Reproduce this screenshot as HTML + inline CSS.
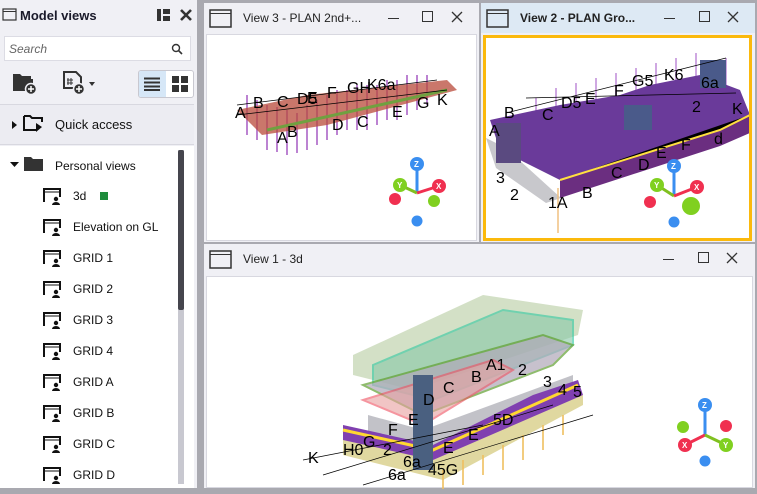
<!DOCTYPE html>
<html><head><meta charset="utf-8"><style>
*{box-sizing:border-box;margin:0;padding:0}
body{width:757px;height:488px;overflow:hidden;background:#a9a9b0;font-family:"Liberation Sans",sans-serif;position:relative}
.abs{position:absolute}
#left{left:0;top:0;width:197px;height:488px;background:#f0f0f5}
.title{font-weight:bold;font-size:13px;color:#1a1a2a}
.item{position:absolute;left:43px;font-size:12px;color:#111;height:20px;line-height:20px}
.item svg{position:absolute;left:0;top:1px}
.item span{position:absolute;left:30px;white-space:nowrap}
.win{position:absolute;background:#f0f0f5}
.hdr{position:absolute;left:0;top:0;right:0;height:30px}
.wt{position:absolute;top:8px;left:39px;font-size:12px;color:#222;white-space:nowrap}
.content{position:absolute;background:#fff;border:1px solid #d8d8e0}
</style></head><body>
<div id="left" class="abs">
  <svg class="abs" style="left:2px;top:8px" width="16" height="14"><rect x="1" y="1" width="13" height="11" fill="none" stroke="#333" stroke-width="1.2"/><line x1="1" y1="3.5" x2="14" y2="3.5" stroke="#333"/></svg>
  <div class="abs title" style="left:20px;top:8px">Model views</div>
  <svg class="abs" style="left:157px;top:9px" width="14" height="12"><rect x="0" y="0" width="4" height="12" fill="#333"/><rect x="6" y="0" width="7" height="5" fill="#333"/><rect x="6" y="7" width="7" height="5" fill="#333"/></svg>
  <svg class="abs" style="left:180px;top:9px" width="12" height="12"><path d="M1 1L11 11M11 1L1 11" stroke="#333" stroke-width="2.6"/></svg>
  <div class="abs" style="left:4px;top:36px;width:187px;height:25px;background:#fff;border:1px solid #dcdce4"><span style="position:absolute;left:4px;top:5px;font-size:12px;font-style:italic;color:#666">Search</span>
    <svg class="abs" style="left:166px;top:6px" width="12" height="12"><circle cx="5" cy="5" r="3.5" fill="none" stroke="#333" stroke-width="1.4"/><path d="M7.5 7.5L11 11" stroke="#333" stroke-width="1.6"/></svg></div>
  <svg class="abs" style="left:12px;top:71px" width="26" height="24"><path d="M1 3h7l2 2h9v5H1z" fill="#333"/><path d="M1 8h20v12H1z" fill="#333"/><circle cx="19" cy="18" r="5.5" fill="#333" stroke="#f0f0f5" stroke-width="1.5"/><path d="M19 15v6M16 18h6" stroke="#fff" stroke-width="1.5"/></svg>
  <svg class="abs" style="left:62px;top:70px" width="38" height="26"><path d="M2 2h12l5 5v11H2z" fill="none" stroke="#333" stroke-width="2"/><path d="M6 8v7M9 8v7M5 10h6M5 13h6" stroke="#333" stroke-width="1"/><circle cx="17" cy="19" r="5.5" fill="#333" stroke="#f0f0f5" stroke-width="1.5"/><path d="M17 16v6M14 19h6" stroke="#fff" stroke-width="1.5"/><path d="M27 12h6l-3 4z" fill="#333"/></svg>
  <div class="abs" style="left:138px;top:70px;width:56px;height:28px;border:1px solid #c8c8d0;border-radius:3px;background:#fff"></div>
  <div class="abs" style="left:139px;top:71px;width:27px;height:26px;background:#d6e7f7;border-radius:2px 0 0 2px"></div>
  <svg class="abs" style="left:144px;top:77px" width="16" height="14"><path d="M0 1.5h16M0 5.5h16M0 9.5h16M0 13h16" stroke="#333" stroke-width="2"/></svg>
  <svg class="abs" style="left:172px;top:76px" width="16" height="16"><rect x="0" y="0" width="7" height="7" fill="#333"/><rect x="9" y="0" width="7" height="7" fill="#333"/><rect x="0" y="9" width="7" height="7" fill="#333"/><rect x="9" y="9" width="7" height="7" fill="#333"/></svg>
  <div class="abs" style="left:0;top:104px;width:194px;height:41px;background:#ececf2;border-top:1px solid #d8d8e0;border-bottom:1px solid #d8d8e0"></div>
  <svg class="abs" style="left:12px;top:121px" width="5" height="8"><path d="M0 0L5 4L0 8z" fill="#111"/></svg>
  <svg class="abs" style="left:23px;top:114px" width="22" height="20"><path d="M1 2h6l2 2h10v4" fill="none" stroke="#111" stroke-width="2"/><path d="M1 2v14h12" fill="none" stroke="#111" stroke-width="2"/><path d="M13 18l6-5-6-4z" fill="#111"/></svg>
  <div class="abs" style="left:55px;top:117px;font-size:13px;color:#111">Quick access</div>
  <div class="abs" style="left:0;top:146px;width:194px;height:342px;background:#fff"></div>
  <svg class="abs" style="left:10px;top:162px" width="9" height="5"><path d="M0 0h9L4.5 5z" fill="#111"/></svg>
  <svg class="abs" style="left:24px;top:156px" width="20" height="16"><path d="M0 1h7l2 2h10v12H0z" fill="#333"/></svg>
  <div class="abs" style="left:55px;top:159px;font-size:12px;color:#111">Personal views</div>
  <div class="abs" style="left:178px;top:150px;width:6px;height:334px;background:#c8c8d0"></div>
  <div class="abs" style="left:178px;top:150px;width:6px;height:160px;background:#45454d;border-radius:2px"></div>
  <div class="abs" style="left:194px;top:0;width:3px;height:488px;background:#f0f0f5"></div>
</div>
<!-- View 3 -->
<div class="win" style="left:204px;top:3px;width:275px;height:239px">
  <div class="hdr"><svg class="abs" style="left:5px;top:6px" width="24" height="20"><rect x="1" y="1" width="21" height="17" fill="none" stroke="#333" stroke-width="1.5"/><line x1="1" y1="4.5" x2="22" y2="4.5" stroke="#333"/></svg>
  <div class="wt">View 3 - PLAN 2nd+...</div>
  <div class="abs" style="left:184px;top:15px;width:11px;height:1px;background:#333"></div>
  <div class="abs" style="left:218px;top:8px;width:11px;height:11px;border:1.3px solid #333"></div>
  <svg class="abs" style="left:247px;top:8px" width="12" height="12"><path d="M1 1L11 11M11 1L1 11" stroke="#333" stroke-width="1.3"/></svg></div>
  <div class="content" style="left:2px;top:31px;width:271px;height:207px">
  <svg width="271" height="207">
   <g stroke="#a050c0" stroke-width="2" opacity=".7"><path d="M40 60v40M50 65v40M60 70v45M70 72v45M80 75v45M90 78v40M100 70v45M110 65v45M120 60v45M130 55v45M140 55v40M150 50v45M160 50v45M170 50v40M180 45v40M190 45v40M200 40v40M210 40v35M220 40v30"/></g>
   <path d="M30 75L100 60L240 45L250 55L120 90L55 100z" fill="#b84a3a" opacity=".75"/>
   <path d="M60 95L240 55" stroke="#70a040" stroke-width="3"/>
   <path d="M30 70L230 45M30 80L240 55" stroke="#000" stroke-width=".7"/>
   <g font-size="16" fill="#000"><text x="28" y="83">A</text><text x="46" y="73">B</text><text x="70" y="72">C</text><text x="90" y="69">D5</text><text x="100" y="68">E</text><text x="120" y="63">F</text><text x="140" y="58">GH</text><text x="160" y="55">K6a</text><text x="80" y="102">B</text><text x="70" y="108">A</text><text x="185" y="82">E</text><text x="210" y="73">G</text><text x="230" y="70">K</text><text x="150" y="92">C</text><text x="125" y="95">D</text></g>
  </svg>
  <svg class="abs" style="left:180px;top:120px" width="70" height="75"><path d="M30 8v30" stroke="#3a8ef0" stroke-width="3"/><path d="M30 38L13 30" stroke="#80c020" stroke-width="3"/><path d="M30 38L52 31" stroke="#f03050" stroke-width="3"/><circle cx="30" cy="9" r="7" fill="#3a8ef0"/><circle cx="13" cy="30" r="7" fill="#80d020"/><circle cx="52" cy="31" r="7" fill="#f03050"/><circle cx="8" cy="44" r="6" fill="#f03050"/><circle cx="47" cy="46" r="6" fill="#80d020"/><circle cx="30" cy="66" r="5.5" fill="#3a8ef0"/><g fill="#fff" font-size="8" font-weight="bold"><text x="27" y="12">Z</text><text x="10" y="33">Y</text><text x="49" y="34">X</text></g></svg>
  </div>
</div>
<!-- View 2 -->
<div class="win" style="left:481px;top:3px;width:274px;height:239px">
  <div class="hdr" style="background:#dde9f4"><svg class="abs" style="left:5px;top:6px" width="24" height="20"><rect x="1" y="1" width="21" height="17" fill="none" stroke="#333" stroke-width="1.5"/><line x1="1" y1="4.5" x2="22" y2="4.5" stroke="#333"/></svg>
  <div class="wt" style="font-weight:bold">View 2 - PLAN Gro...</div>
  <div class="abs" style="left:183px;top:15px;width:11px;height:1px;background:#333"></div>
  <div class="abs" style="left:218px;top:8px;width:11px;height:11px;border:1.3px solid #333"></div>
  <svg class="abs" style="left:246px;top:8px" width="12" height="12"><path d="M1 1L11 11M11 1L1 11" stroke="#333" stroke-width="1.3"/></svg></div>
  <div class="content" style="left:2px;top:32px;width:269px;height:206px;border:3px solid #fbb90c">
  <svg width="263" height="200">
   <g stroke="#b070d0" stroke-width="2" opacity=".6"><path d="M50 60v25M70 50v25M90 45v25M110 40v25M130 35v25M150 30v25M170 25v25M190 20v25M210 15v30M240 20v30"/></g>
   <path d="M0 100L10 130L60 165L75 160L20 110z" fill="#c8c8cc"/>
   <path d="M4 82L74 67L134 57L164 47L214 37L254 52L264 77L234 92L74 142L14 112z" fill="#6a3a9a"/>
   <path d="M74 142L234 92L264 77L264 95L234 108L74 160z" fill="#6b2e80"/>
   <path d="M74 142L234 92L264 77" stroke="#ffe040" stroke-width="2"/>
   <rect x="138" y="67" width="28" height="25" fill="#4a5a8a"/><rect x="214" y="22" width="26" height="28" fill="#4a5a8a"/>
   <rect x="10" y="85" width="25" height="40" fill="#5a4a80"/>
   <path d="M72 150v45" stroke="#f0c080" stroke-width="1.5"/>
   <path d="M20 75L240 20M40 60L250 55" stroke="#000" stroke-width=".7"/>
   <g font-size="16" fill="#000"><text x="3" y="98">A</text><text x="18" y="80">B</text><text x="56" y="82">C</text><text x="75" y="70">D5</text><text x="99" y="66">E</text><text x="128" y="58">F</text><text x="146" y="48">G5</text><text x="178" y="42">K6</text><text x="215" y="50">6a</text><text x="206" y="74">2</text><text x="246" y="76">K</text><text x="228" y="106">d</text><text x="195" y="112">F</text><text x="170" y="120">E</text><text x="152" y="132">D</text><text x="125" y="140">C</text><text x="96" y="160">B</text><text x="62" y="170">1A</text><text x="24" y="162">2</text><text x="10" y="145">3</text></g>
  </svg>
  <svg class="abs" style="left:155px;top:120px" width="90" height="75"><path d="M33 8v30" stroke="#3a8ef0" stroke-width="3"/><path d="M33 38L16 27" stroke="#80c020" stroke-width="3"/><path d="M33 38L56 29" stroke="#f03050" stroke-width="3"/><circle cx="33" cy="8" r="7" fill="#3a8ef0"/><circle cx="16" cy="27" r="7" fill="#80d020"/><circle cx="56" cy="29" r="7" fill="#f03050"/><circle cx="9" cy="44" r="6" fill="#f03050"/><circle cx="50" cy="48" r="9" fill="#80d020"/><circle cx="33" cy="64" r="5.5" fill="#3a8ef0"/><g fill="#fff" font-size="8" font-weight="bold"><text x="30" y="11">Z</text><text x="13" y="30">Y</text><text x="53" y="32">X</text></g></svg>
  </div>
</div>
<!-- View 1 -->
<div class="win" style="left:204px;top:244px;width:551px;height:244px">
  <div class="hdr"><svg class="abs" style="left:5px;top:6px" width="24" height="20"><rect x="1" y="1" width="21" height="17" fill="none" stroke="#333" stroke-width="1.5"/><line x1="1" y1="4.5" x2="22" y2="4.5" stroke="#333"/></svg>
  <div class="wt">View 1 - 3d</div>
  <div class="abs" style="left:459px;top:15px;width:11px;height:1px;background:#333"></div>
  <div class="abs" style="left:494px;top:8px;width:11px;height:11px;border:1.3px solid #333"></div>
  <svg class="abs" style="left:522px;top:8px" width="12" height="12"><path d="M1 1L11 11M11 1L1 11" stroke="#333" stroke-width="1.3"/></svg></div>
  <div class="content" style="left:2px;top:32px;width:547px;height:212px">
  <svg width="547" height="212">
   <g transform="translate(96,-2)">
   <path d="M50 80L180 20L280 35L275 60L110 115L50 100z" fill="#c8d8b8" opacity=".8"/>
   <path d="M70 90L200 35L270 45L270 70L130 125L70 110z" fill="#88c8a8" opacity=".6" stroke="#30c8a0" stroke-width="2"/>
   <path d="M60 110L240 60L270 70L250 90L120 140z" fill="#b0a8b8" opacity=".7" stroke="#60a030" stroke-width="2"/>
   <path d="M60 125L190 85L210 95L120 150z" fill="#e8a0a0" opacity=".6" stroke="#f05060" stroke-width="2"/>
   <path d="M65 140L120 155L270 100L270 120L140 180L65 160z" fill="#a8a8b0" opacity=".7"/>
   <path d="M40 150L130 170L230 120L275 105L280 120L140 200L40 170z" fill="#8040b0"/>
   <path d="M40 155L130 175L275 110" stroke="#ffd830" stroke-width="3" fill="none"/>
   <path d="M40 165L130 185L280 120L280 130L140 205L40 180z" fill="#e0d8a0"/>
   <rect x="110" y="100" width="20" height="95" fill="#4a6080"/>
   <g stroke="#f0c060" stroke-width="2" opacity=".8"><path d="M140 195v25M160 185v25M180 180v20M200 170v25M220 160v25M240 150v25M260 140v20"/></g>
   <path d="M0 185L180 150M60 210L290 140M20 200L250 130" stroke="#000" stroke-width=".7"/>
   <g font-size="16" fill="#000"><text x="183" y="95">A1</text><text x="168" y="107">B</text><text x="140" y="118">C</text><text x="120" y="130">D</text><text x="105" y="150">E</text><text x="85" y="160">F</text><text x="60" y="172">G</text><text x="215" y="100">2</text><text x="240" y="112">3</text><text x="255" y="120">4</text><text x="270" y="122">5</text><text x="190" y="150">5D</text><text x="165" y="165">E</text><text x="140" y="178">E</text><text x="40" y="180">H0</text><text x="5" y="188">K</text><text x="80" y="180">2</text><text x="100" y="192">6a</text><text x="125" y="200">45G</text><text x="85" y="205">6a</text></g>
   </g>
  </svg>
  <svg class="abs" style="left:466px;top:120px" width="70" height="75"><path d="M32 8v30" stroke="#3a8ef0" stroke-width="3"/><path d="M32 38L12 48" stroke="#f03050" stroke-width="3"/><path d="M32 38L53 48" stroke="#80c020" stroke-width="3"/><circle cx="32" cy="8" r="7" fill="#3a8ef0"/><circle cx="12" cy="48" r="7" fill="#f03050"/><circle cx="53" cy="48" r="7" fill="#80d020"/><circle cx="10" cy="30" r="6" fill="#80d020"/><circle cx="53" cy="29" r="6" fill="#f03050"/><circle cx="32" cy="64" r="5.5" fill="#3a8ef0"/><g fill="#fff" font-size="8" font-weight="bold"><text x="29" y="11">Z</text><text x="9" y="51">X</text><text x="50" y="51">Y</text></g></svg>
  </div>
</div>
<!-- list items -->
<div class="item" style="top:186px"><svg width="18" height="18"><path d="M1 15V2h16v8" fill="none" stroke="#111" stroke-width="2"/><path d="M1 5h16" stroke="#111" stroke-width="1"/><circle cx="13" cy="12" r="2.2" fill="#111"/><path d="M9 18a4 3 0 0 1 8 0z" fill="#111"/></svg><span>3d</span><span style="left:57px;top:6px;width:8px;height:8px;background:#1e8c3c"></span></div>
<div class="item" style="top:217px"><svg width="18" height="18"><path d="M1 15V2h16v8" fill="none" stroke="#111" stroke-width="2"/><path d="M1 5h16" stroke="#111" stroke-width="1"/><circle cx="13" cy="12" r="2.2" fill="#111"/><path d="M9 18a4 3 0 0 1 8 0z" fill="#111"/></svg><span>Elevation on GL</span></div>
<div class="item" style="top:248px"><svg width="18" height="18"><path d="M1 15V2h16v8" fill="none" stroke="#111" stroke-width="2"/><path d="M1 5h16" stroke="#111" stroke-width="1"/><circle cx="13" cy="12" r="2.2" fill="#111"/><path d="M9 18a4 3 0 0 1 8 0z" fill="#111"/></svg><span>GRID 1</span></div>
<div class="item" style="top:279px"><svg width="18" height="18"><path d="M1 15V2h16v8" fill="none" stroke="#111" stroke-width="2"/><path d="M1 5h16" stroke="#111" stroke-width="1"/><circle cx="13" cy="12" r="2.2" fill="#111"/><path d="M9 18a4 3 0 0 1 8 0z" fill="#111"/></svg><span>GRID 2</span></div>
<div class="item" style="top:310px"><svg width="18" height="18"><path d="M1 15V2h16v8" fill="none" stroke="#111" stroke-width="2"/><path d="M1 5h16" stroke="#111" stroke-width="1"/><circle cx="13" cy="12" r="2.2" fill="#111"/><path d="M9 18a4 3 0 0 1 8 0z" fill="#111"/></svg><span>GRID 3</span></div>
<div class="item" style="top:341px"><svg width="18" height="18"><path d="M1 15V2h16v8" fill="none" stroke="#111" stroke-width="2"/><path d="M1 5h16" stroke="#111" stroke-width="1"/><circle cx="13" cy="12" r="2.2" fill="#111"/><path d="M9 18a4 3 0 0 1 8 0z" fill="#111"/></svg><span>GRID 4</span></div>
<div class="item" style="top:372px"><svg width="18" height="18"><path d="M1 15V2h16v8" fill="none" stroke="#111" stroke-width="2"/><path d="M1 5h16" stroke="#111" stroke-width="1"/><circle cx="13" cy="12" r="2.2" fill="#111"/><path d="M9 18a4 3 0 0 1 8 0z" fill="#111"/></svg><span>GRID A</span></div>
<div class="item" style="top:403px"><svg width="18" height="18"><path d="M1 15V2h16v8" fill="none" stroke="#111" stroke-width="2"/><path d="M1 5h16" stroke="#111" stroke-width="1"/><circle cx="13" cy="12" r="2.2" fill="#111"/><path d="M9 18a4 3 0 0 1 8 0z" fill="#111"/></svg><span>GRID B</span></div>
<div class="item" style="top:434px"><svg width="18" height="18"><path d="M1 15V2h16v8" fill="none" stroke="#111" stroke-width="2"/><path d="M1 5h16" stroke="#111" stroke-width="1"/><circle cx="13" cy="12" r="2.2" fill="#111"/><path d="M9 18a4 3 0 0 1 8 0z" fill="#111"/></svg><span>GRID C</span></div>
<div class="item" style="top:465px"><svg width="18" height="18"><path d="M1 15V2h16v8" fill="none" stroke="#111" stroke-width="2"/><path d="M1 5h16" stroke="#111" stroke-width="1"/><circle cx="13" cy="12" r="2.2" fill="#111"/><path d="M9 18a4 3 0 0 1 8 0z" fill="#111"/></svg><span>GRID D</span></div>
</body></html>
